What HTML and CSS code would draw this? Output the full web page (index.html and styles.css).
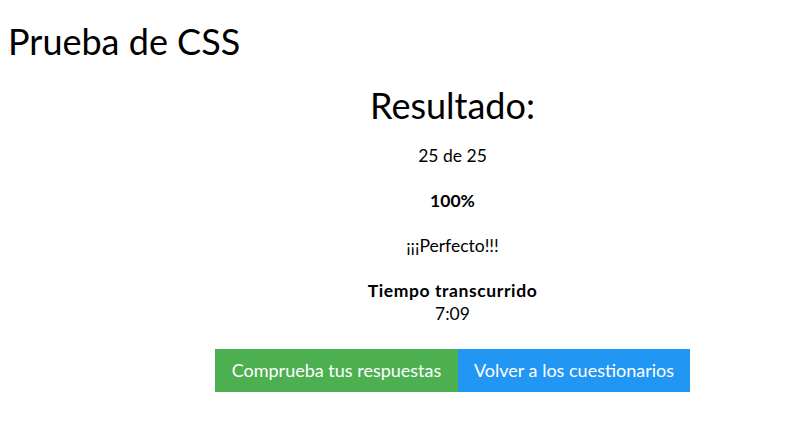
FILE: index.html
```html
<!DOCTYPE html>
<html lang="es">
<head>
<meta charset="utf-8">
<title>Prueba de CSS</title>
<link rel="stylesheet" href="styles.css">
</head>
<body>
<header class="page-header">
  <h1 class="page-title">Prueba de CSS</h1>
</header>
<main class="result">
  <h2 class="result-title">Resultado:</h2>
  <p class="stat">25 de 25</p>
  <p class="stat stat-bold">100%</p>
  <p class="stat">¡¡¡Perfecto!!!</p>
  <div class="stat time">
    <p class="time-label">Tiempo transcurrido</p>
    <p class="time-value">7:09</p>
  </div>
  <div class="actions">
    <a class="btn btn-green" href="#">Comprueba tus respuestas</a>
    <a class="btn btn-blue" href="#">Volver a los cuestionarios</a>
  </div>
</main>
</body>
</html>
```
FILE: styles.css
```css
html, body {
  margin: 0;
  padding: 0;
  background: #fff;
}
body {
  font-family: Lato, "Open Sans", sans-serif;
  color: #000;
  font-size: 17.5px;
  line-height: 23px;
}
.page-title {
  font-size: 36px;
  line-height: 43px;
  font-weight: 400;
  margin: 20px 0 0 8px;
}
.result {
  margin-left: 106px;
  display: flex;
  flex-direction: column;
  align-items: center;
  text-align: center;
}
.result-title {
  font-size: 36px;
  line-height: 43px;
  font-weight: 400;
  margin: 21px 0 17px;
}
.stat {
  margin: 0 0 22px;
}
.stat-bold {
  font-weight: 700;
}
.time {
  margin-bottom: 24px;
}
.time p {
  margin: 0;
}
.time-label {
  font-weight: 700;
  letter-spacing: 0.6px;
}
.actions {
  display: flex;
}
.btn {
  display: block;
  box-sizing: border-box;
  padding: 8px 16px;
  font-size: 18px;
  line-height: 27px;
  color: #fff;
  text-decoration: none;
  text-align: center;
  white-space: nowrap;
}
.btn-green {
  background: #4caf50;
  width: 243px;
}
.btn-blue {
  background: #2196f3;
  width: 232px;
}
```
